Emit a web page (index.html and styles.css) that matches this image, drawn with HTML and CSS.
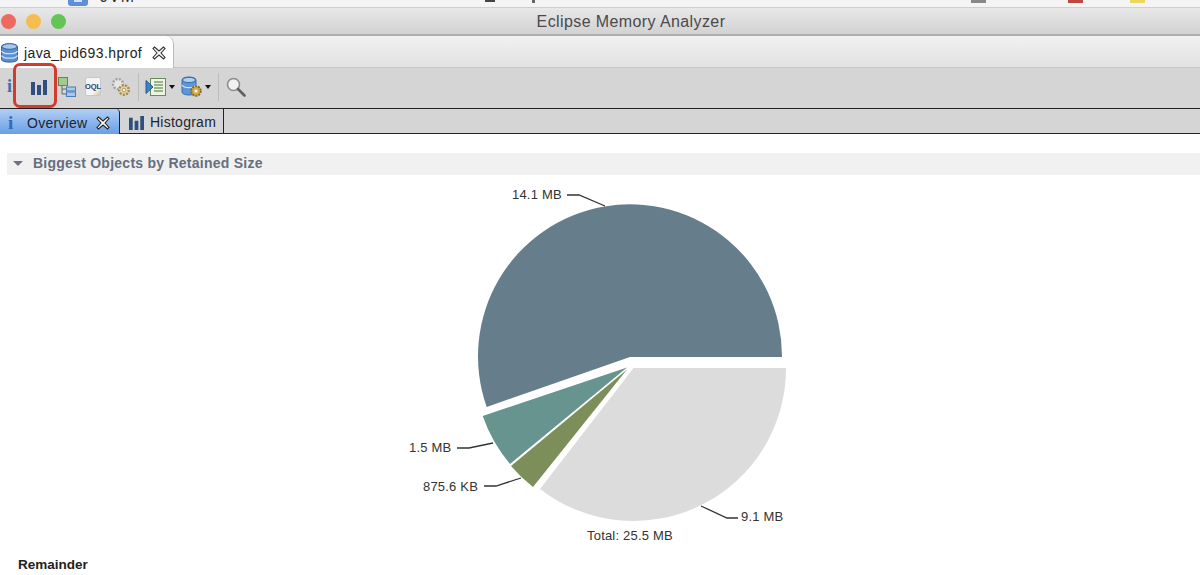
FILE: index.html
```html
<!DOCTYPE html>
<html lang="en">
<head>
  <meta charset="UTF-8">
  <title>Eclipse Memory Analyzer</title>
  <link rel="stylesheet" href="styles.css">
</head>
<body>
  <div class="behind">
    <span class="behind__folder"></span>
    <span class="behind__name">JVM</span>
    <span class="behind__mark behind__mark--dark"></span>
    <span class="behind__mark behind__mark--dot"></span>
    <span class="behind__mark behind__mark--grey"></span>
    <span class="behind__mark behind__mark--red"></span>
    <span class="behind__mark behind__mark--yellow"></span>
  </div>

  <header class="titlebar">
    <div class="lights">
      <span class="light light--red"></span>
      <span class="light light--yellow"></span>
      <span class="light light--green"></span>
    </div>
    <div class="titlebar__text">Eclipse Memory Analyzer</div>
  </header>

  <div class="editor-tabs">
    <div class="editor-tab">
      <svg class="icon-db" width="17" height="20" viewBox="0 0 17 20">
        <path d="M.5 3.500C.5 0 16.500 0 16.500 3.500v13c0 3.500-16 3.500-16 0z" fill="#5b8fd0" stroke="#34649f"/>
        <ellipse cx="8.500" cy="3.500" rx="7.500" ry="2.800" fill="#a9c8ea" stroke="#34649f"/>
        <path d="M.5 8c2 3.500 14 3.500 16 0M.5 12.500c2 3.500 14 3.500 16 0" fill="none" stroke="#cfe0f3" stroke-width="1.300"/>
      </svg>
      <span class="editor-tab__label">java_pid693.hprof</span>
      <svg class="icon-close" width="14" height="14" viewBox="0 0 14 14">
        <path d="M2.500 1 7 5l4.500-4L13 2.500 9 7l4 4.500-1.500 1.500L7 9l-4.500 4L1 11.500 5 7 1 2.500z" fill="#fff" stroke="#333" stroke-width="1.100"/>
      </svg>
    </div>
  </div>

  <div class="toolbar">
    <span class="tool-info">i</span>
    <svg class="tool tool--bars" width="16" height="16" viewBox="0 0 16 16">
      <path d="M0 3h4v13H0zM6 6h4v10H6zM12 1h4v15h-4z" fill="#2f4f7f"/>
    </svg>
    <svg class="tool tool--tree" width="18" height="20" viewBox="0 0 18 20">
      <rect x=".5" y=".5" width="9" height="8" fill="#a2cc8c" stroke="#5c8a4a"/>
      <path d="M4 9v8h4M4 12h4" fill="none" stroke="#666"/>
      <rect x="8.500" y="10" width="9" height="4" fill="#a8c8ea" stroke="#4a7cb5"/>
      <rect x="8.500" y="15" width="9" height="4.500" fill="#a8c8ea" stroke="#4a7cb5"/>
    </svg>
    <div class="tool-oql">
      <span class="tool-oql__text">OQL</span>
    </div>
    <svg class="tool tool--gears" width="20" height="20" viewBox="0 0 20 20">
      <circle cx="7" cy="7" r="5" fill="#e6e6e6" stroke="#a3a3a3" stroke-width="2.400" stroke-dasharray="2 1.400"/>
      <circle cx="13" cy="13" r="4.800" fill="#e8d6a6" stroke="#a88a4c" stroke-width="2.400" stroke-dasharray="2 1.300"/>
      <circle cx="13" cy="13" r="1.800" fill="#f4f4f4" stroke="#a88a4c" stroke-width=".8"/>
    </svg>
    <span class="tool-sep"></span>
    <svg class="tool tool--run" width="21" height="20" viewBox="0 0 21 20">
      <rect x="5.500" y="1.500" width="15" height="17" fill="#eef3e4" stroke="#6c8a58"/>
      <path d="M9 5h9M9 8h9M9 11h9M9 14h9" stroke="#7aa06a" stroke-width="1.500"/>
      <path d="M1 3.500 8 10l-7 6.500z" fill="#3c82c8" stroke="#25598f"/>
    </svg>
    <span class="tool-caret"></span>
    <svg class="tool tool--dbgear" width="21" height="22" viewBox="0 0 21 22">
      <path d="M1 4c0-4 14-4 14 0v12c0 4-14 4-14 0z" fill="#5b96d8" stroke="#3a6da8"/>
      <ellipse cx="8" cy="4" rx="6.500" ry="2.600" fill="#b2d0ee" stroke="#3a6da8"/>
      <path d="M1 9c2 3.500 12 3.500 14 0" fill="none" stroke="#d5e4f4" stroke-width="1.300"/>
      <circle cx="15" cy="15" r="4.800" fill="#d8a93a" stroke="#806a30" stroke-width="1.800" stroke-dasharray="2 1"/>
      <circle cx="15" cy="15" r="1.600" fill="#fff"/>
    </svg>
    <span class="tool-caret"></span>
    <span class="tool-sep tool-sep--second"></span>
    <svg class="tool tool--search" width="20" height="20" viewBox="0 0 20 20">
      <circle cx="7.500" cy="7.500" r="6" fill="#f1f1f1" stroke="#8d8d8d" stroke-width="1.600"/>
      <path d="m12 12 6.500 6.500" stroke="#5f5f5f" stroke-width="2.600" stroke-linecap="round"/>
    </svg>
    <div class="highlight"></div>
  </div>

  <div class="pane-tabs">
    <div class="pane-tab pane-tab--active">
      <span class="pane-tab__info">i</span>
      <span class="pane-tab__label">Overview</span>
      <svg class="icon-close" width="14" height="14" viewBox="0 0 14 14">
        <path d="M2.500 1 7 5l4.500-4L13 2.500 9 7l4 4.500-1.500 1.500L7 9l-4.500 4L1 11.500 5 7 1 2.500z" fill="#fff" stroke="#222" stroke-width="1.100"/>
      </svg>
    </div>
    <div class="pane-tab">
      <svg width="15" height="15" viewBox="0 0 16 16">
        <path d="M0 3h4v13H0zM6 6h4v10H6zM12 1h4v15h-4z" fill="#2f4f7f"/>
      </svg>
      <span class="pane-tab__label">Histogram</span>
    </div>
  </div>

  <main class="content">
    <div class="section-head">
      <span class="section-head__arrow"></span>
      <h2 class="section-head__title">Biggest Objects by Retained Size</h2>
    </div>

    <svg class="pie" width="420" height="375" viewBox="400 175 420 375">
      <!-- slices: centre and radius read from the chart, each one slightly pulled apart -->
      <path d="M630 356H782A152 152 0 1 0 486.700 406Z" fill="#667d8b"/>
      <path d="M633.500 367H786A152.500 152.500 0 0 1 540 488Z" fill="#dcdcdc"/>
      <path d="M627 366.500 482.700 415A152 152 0 0 0 510 463Z" fill="#68948f"/>
      <path d="M627 368.500 511 465A151 151 0 0 0 533 486Z" fill="#7c8f5b"/>

      <g class="pie__leaders">
        <path d="M567 194h12l26 11"/>
        <path d="M457 447h12l24-5"/>
        <path d="M484 485h12l25-8"/>
        <path d="M701 505l26 12h11"/>
      </g>

      <g class="pie__labels">
        <text x="512" y="198">14.1 MB</text>
        <text x="409" y="451">1.5 MB</text>
        <text x="423" y="490">875.6 KB</text>
        <text x="741" y="520">9.1 MB</text>
        <text x="587" y="539">Total: 25.5 MB</text>
      </g>
    </svg>

    <div class="remainder">Remainder</div>
  </main>
</body>
</html>
```

FILE: styles.css
```css
body {
  margin: 0;
  height: 575px;
  overflow: hidden;
  background: #fff;
  font-family: "Liberation Sans", Arial, sans-serif;
  color: #222;
}

/* strip of the window behind */
.behind {
  position: relative;
  height: 7px;
  overflow: hidden;
  background: #f4f4f4;
  border-bottom: 1px solid #cfcfcf;
}
.behind__folder {
  position: absolute;
  left: 68px;
  top: -6px;
  width: 20px;
  height: 12px;
  border-radius: 3px;
  background: #5d8fdc;
}
.behind__folder::after {
  content: "";
  position: absolute;
  left: 6px;
  top: 5px;
  width: 8px;
  height: 3px;
  background: #cfe0f8;
}
.behind__name {
  position: absolute;
  left: 100px;
  top: -12px;
  font-size: 16px;
  letter-spacing: 1px;
  color: #333;
}
.behind__mark {
  position: absolute;
  top: 0;
  width: 15px;
  height: 3px;
}
.behind__mark--dark { left: 485px; width: 10px; height: 2px; background: #444; }
.behind__mark--dot { left: 532px; width: 3px; background: #666; }
.behind__mark--grey { left: 971px; background: #888; }
.behind__mark--red { left: 1068px; background: #c0493f; }
.behind__mark--yellow { left: 1130px; background: #ecd860; }

.titlebar {
  position: relative;
  height: 26px;
  display: flex;
  align-items: center;
  justify-content: center;
  background: linear-gradient(#e8e8e8, #d2d2d2);
  border-bottom: 2px solid #aeaeae;
}
.titlebar__text {
  margin: 2px 0 0 62px;
  font-size: 16px;
  letter-spacing: 0.400px;
  color: #4a4a4a;
}
.lights {
  position: absolute;
  left: 1px;
  top: 6px;
  display: flex;
  gap: 10px;
}
.light {
  width: 15px;
  height: 15px;
  border-radius: 50%;
}
.light--red { background: #ee6a5f; }
.light--yellow { background: #f5bd4f; }
.light--green { background: #62c554; }

.editor-tabs {
  height: 32px;
  display: flex;
  box-sizing: border-box;
  background: linear-gradient(#f1f1f1, #e2e2e2);
  border-bottom: 1px solid #c6c6c6;
}
.editor-tab {
  width: 174px;
  height: 32px;
  display: flex;
  align-items: center;
  box-sizing: border-box;
  padding: 2px 0 0 1px;
  background: #fff;
  border-top-right-radius: 8px;
  border-right: 1px solid #bbb;
}
.editor-tab__label {
  margin-left: 6px;
  font-size: 14px;
  letter-spacing: 0.400px;
  color: #222;
}
.editor-tab .icon-close {
  margin-left: 10px;
}

.toolbar {
  position: relative;
  height: 37px;
  padding-bottom: 3px;
  display: flex;
  align-items: center;
  background: #d5d5d5;
  border-bottom: 1px solid #222;
}
.tool {
  flex: none;
}
.tool-info {
  margin-left: 7px;
  width: 8px;
  font-family: "Liberation Serif", serif;
  font-weight: bold;
  font-size: 18px;
  color: #3f6fa8;
}
.tool--bars { margin-left: 16px; }
.tool--tree { margin-left: 11px; }
.tool-oql {
  flex: none;
  width: 16px;
  height: 19px;
  margin-left: 9px;
  display: flex;
  align-items: center;
  justify-content: center;
  background: linear-gradient(135deg, #f4f4f4 70%, #d9c98f);
  border: 1px solid #c6c6cc;
  box-sizing: border-box;
  border-radius: 2px;
}
.tool-oql__text {
  font-size: 7.500px;
  font-weight: bold;
  color: #24406f;
}
.tool--gears { margin-left: 10px; }
.tool-sep {
  width: 1px;
  height: 28px;
  margin-left: 7px;
  background: #bdbdbd;
}
.tool--run { margin-left: 6px; }
.tool-caret {
  width: 0;
  height: 0;
  margin-left: 3px;
  border-left: 3.500px solid transparent;
  border-right: 3.500px solid transparent;
  border-top: 4.500px solid #111;
}
.tool--dbgear { margin-left: 6px; }
.tool-sep--second { margin-left: 7px; }
.tool--search { margin-left: 7px; }

.highlight {
  position: absolute;
  left: 13px;
  top: -5px;
  width: 44px;
  height: 45px;
  box-sizing: border-box;
  border: 3px solid #d23c2f;
  border-radius: 7px;
}

.pane-tabs {
  height: 24px;
  display: flex;
  background: #d5d5d5;
  border-bottom: 1px solid #222;
}
.pane-tab {
  height: 24px;
  display: flex;
  align-items: center;
  box-sizing: border-box;
  padding: 2px 7px 0 9px;
  gap: 6px;
  border-right: 1px solid #222;
  font-size: 14px;
}
.pane-tab--active {
  width: 120px;
  height: 25px;
  padding-left: 8px;
  border-top-right-radius: 4px;
  background: linear-gradient(#b2cff4, #689fe6);
  gap: 8px;
}
.pane-tab--active .icon-close {
  margin-left: 1px;
}
.pane-tab__info {
  width: 11px;
  font-family: "Liberation Serif", serif;
  font-weight: bold;
  font-size: 19px;
  color: #2f6bb2;
}
.pane-tab__label {
  letter-spacing: 0.250px;
  color: #1c2433;
}

.section-head {
  height: 20px;
  padding-bottom: 2px;
  margin: 19px 0 0 7px;
  display: flex;
  align-items: center;
  background: #f1f1f1;
}
.section-head__arrow {
  width: 0;
  height: 0;
  margin-left: 6px;
  border-left: 5px solid transparent;
  border-right: 5px solid transparent;
  border-top: 5px solid #6b7280;
}
.section-head__title {
  margin: 0 0 0 10px;
  font-size: 14px;
  letter-spacing: 0.250px;
  color: #656f7f;
}

.pie {
  display: block;
  margin: 1px 0 0 400px;
}
.pie__leaders path {
  fill: none;
  stroke: #333;
  stroke-width: 1.300;
}
.pie__labels text {
  font-size: 13px;
  letter-spacing: 0.200px;
  fill: #333;
}

.remainder {
  margin: 6px 0 0 18px;
  font-size: 13.500px;
  font-weight: bold;
  color: #222;
}
```
